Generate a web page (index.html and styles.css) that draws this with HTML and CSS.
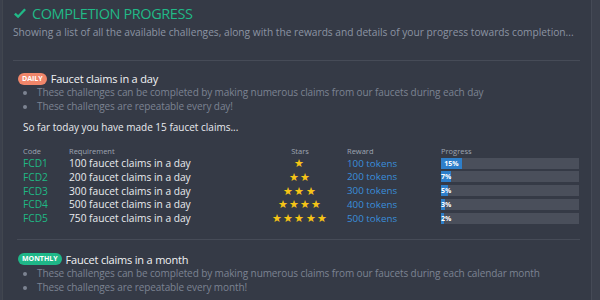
FILE: index.html
```html
<!DOCTYPE html>
<html lang="en">

<head>
    <meta charset="UTF-8" />
    <title>Completion Progress</title>
    <link rel="stylesheet" href="styles.css">
</head>

<body>
    <div class="panel">
        <h1 class="title">
            <svg class="check" viewBox="0 0 16 14" width="14" height="12"><path d="M1 7.5 L5.8 12 L15 2.2 L13 0.5 L5.8 8.3 L3 5.5 Z" fill="#21b987"/></svg>
            COMPLETION PROGRESS
        </h1>
        <p class="intro">Showing a list of all the available challenges, along with the rewards and details of your progress towards completion...</p>

        <!-- Daily -->
        <section class="challenge">
            <div class="challenge-head">
                <span class="badge badge-daily">DAILY</span>
                <span class="challenge-name">Faucet claims in a day</span>
            </div>
            <ul class="notes">
                <li>These challenges can be completed by making numerous claims from our faucets during each day</li>
                <li>These challenges are repeatable every day!</li>
            </ul>
            <p class="summary">So far today you have made 15 faucet claims...</p>

            <div class="table">
                <div class="row head">
                    <span>Code</span><span>Requirement</span><span class="c">Stars</span><span class="reward">Reward</span><span>Progress</span>
                </div>
                <div class="row">
                    <span class="code">FCD1</span><span>100 faucet claims in a day</span><span class="c stars">★</span><span class="reward tokens">100 tokens</span>
                    <span class="bar"><span class="fill" style="width: 15%"><b>15%</b></span></span>
                </div>
                <div class="row">
                    <span class="code">FCD2</span><span>200 faucet claims in a day</span><span class="c stars">★★</span><span class="reward tokens">200 tokens</span>
                    <span class="bar"><span class="fill" style="width: 7%"><b>7%</b></span></span>
                </div>
                <div class="row">
                    <span class="code">FCD3</span><span>300 faucet claims in a day</span><span class="c stars">★★★</span><span class="reward tokens">300 tokens</span>
                    <span class="bar"><span class="fill" style="width: 5%"><b>5%</b></span></span>
                </div>
                <div class="row">
                    <span class="code">FCD4</span><span>500 faucet claims in a day</span><span class="c stars">★★★★</span><span class="reward tokens">400 tokens</span>
                    <span class="bar"><span class="fill" style="width: 3%"><b>3%</b></span></span>
                </div>
                <div class="row">
                    <span class="code">FCD5</span><span>750 faucet claims in a day</span><span class="c stars">★★★★★</span><span class="reward tokens">500 tokens</span>
                    <span class="bar"><span class="fill" style="width: 2%"><b>2%</b></span></span>
                </div>
            </div>
        </section>

        <!-- Monthly -->
        <section class="challenge">
            <div class="challenge-head">
                <span class="badge badge-monthly">MONTHLY</span>
                <span class="challenge-name">Faucet claims in a month</span>
            </div>
            <ul class="notes">
                <li>These challenges can be completed by making numerous claims from our faucets during each calendar month</li>
                <li>These challenges are repeatable every month!</li>
            </ul>
        </section>
    </div>
</body>

</html>
```

FILE: styles.css
```css
body {
    margin: 0;
    background-color: #3b404c;
    font-family: "Open Sans", sans-serif;
    color: #e9ebef;
    overflow: hidden;
}

.panel {
    width: 590px;
    height: 300px;
    margin-left: 2px;
    padding: 3px 9px 0 10px;
    box-sizing: border-box;
    background-color: #353a46;
    border-left: 1px solid #41464f;
    border-right: 1px solid #454a56;
}

.title {
    margin: 0;
    display: flex;
    align-items: center;
    gap: 5px;
    font-size: 14.5px;
    font-weight: 400;
    letter-spacing: -0.4px;
    color: #21b987;
    line-height: 22px;
}

.intro {
    margin: 0 2px 0 0;
    font-size: 10.2px;
    color: #8c94a3;
    line-height: 14px;
    white-space: nowrap;
    padding-bottom: 21px;
    border-bottom: 1px solid #464b57;
}

.challenge {
    padding: 11px 0 0 5px;
    margin-right: 2px;
}

.challenge + .challenge {
    border-top: 1px solid #464b57;
    margin-left: 4px;
    padding-left: 1px;
    padding-top: 13px;
}

.challenge-head {
    display: flex;
    align-items: center;
    gap: 4px;
    height: 13px;
}

.badge {
    font-size: 7px;
    font-weight: 700;
    color: #fff;
    border-radius: 6px;
    padding: 0 4px;
    line-height: 12px;
}

.badge-daily {
    background-color: #f0866a;
}

.badge-monthly {
    background-color: #1fb788;
}

.challenge-name {
    font-size: 11px;
    letter-spacing: -0.2px;
    color: #f1f2f4;
}

.notes {
    margin: 0;
    padding-left: 19px;
    font-size: 10px;
    letter-spacing: -0.1px;
    line-height: 14px;
    color: #7c8392;
    white-space: nowrap;
}

.summary {
    margin: 7px 0 0 5px;
    font-size: 10px;
    line-height: 14px;
}

.table {
    margin: 12px 0 0 5px;
    padding-bottom: 14px;
}

.row {
    display: grid;
    grid-template-columns: 46px 190px 82px 100px 138px;
    align-items: center;
    height: 13.75px;
    font-size: 10.2px;
    white-space: nowrap;
}

.row.head {
    font-size: 7.5px;
    color: #9ea5b2;
    height: 10px;
}

.c {
    text-align: center;
}

.reward {
    padding-left: 6px;
}

.code {
    color: #20b884;
}

.tokens {
    color: #3a8edb;
    font-size: 9.8px;
}

.stars {
    color: #f6c416;
    font-size: 11px;
    line-height: 12px;
    letter-spacing: 1.2px;
}

.bar {
    display: flex;
    height: 11px;
    background-color: #4a4f5b;
}

.fill {
    display: flex;
    align-items: center;
    background-color: #2e7fca;
}

.fill b {
    margin: 0 auto;
    font-size: 7px;
    color: #fff;
}
```
